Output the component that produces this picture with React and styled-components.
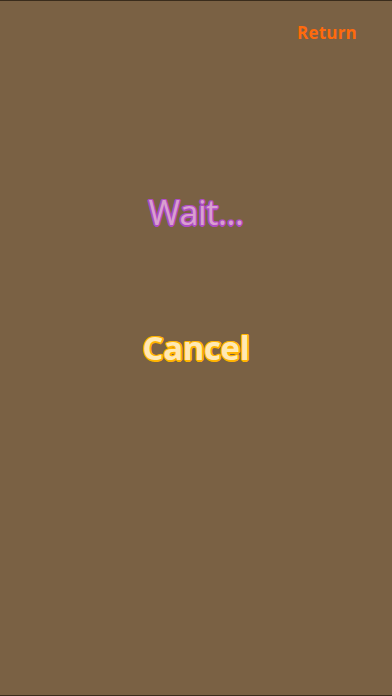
import React from 'react';
import styled, { createGlobalStyle } from 'styled-components';

const GlobalStyle = createGlobalStyle`
  html, body {
    margin: 0;
    padding: 0;
    background: #7a6144;
  }
  #root {
    height: 100vh;
  }
`;

const Screen = styled.div`
  height: 696px;
  box-sizing: border-box;
  background: #7a6144;
  border-top: 1px solid #3a2c1c;
  border-bottom: 1px solid #3a2c1c;
  display: flex;
  flex-direction: column;
  font-family: "Open Sans", "Noto Sans", sans-serif;
`;

const TopBar = styled.div`
  display: flex;
  justify-content: flex-end;
  padding: 20px 35px 0 0;
`;

const ReturnButton = styled.button`
  background: none;
  border: none;
  padding: 0;
  color: #ff6a0c;
  font-family: inherit;
  font-weight: 700;
  font-size: 17px;
  line-height: 24px;
  letter-spacing: 0.2px;
  cursor: pointer;
`;

const Center = styled.div`
  display: flex;
  flex-direction: column;
  align-items: center;
  padding-top: 140px;
  gap: 83px;
`;

const Outlined = styled.div`
  font-size: ${(p) => p.size}px;
  font-weight: ${(p) => p.weight};
  line-height: 1.6;
  color: ${(p) => p.fill};
  letter-spacing: -0.4px;
  text-shadow:
    1.5px 0 0 ${(p) => p.stroke},
    -1.5px 0 0 ${(p) => p.stroke},
    0 1.5px 0 ${(p) => p.stroke},
    0 -1.5px 0 ${(p) => p.stroke},
    1px 1px 0 ${(p) => p.stroke},
    -1px -1px 0 ${(p) => p.stroke},
    1px -1px 0 ${(p) => p.stroke},
    -1px 1px 0 ${(p) => p.stroke};
`;

const App = () => {
  return (
    <>
      <GlobalStyle />
      <Screen>
        <TopBar>
          <ReturnButton>Return</ReturnButton>
        </TopBar>
        <Center>
          <Outlined size={34} weight={400} fill="#d9a0cf" stroke="#b04cc4">
            Wait...
          </Outlined>
          <Outlined size={33} weight={700} fill="#ffe9b4" stroke="#ffb300">
            Cancel
          </Outlined>
        </Center>
      </Screen>
    </>
  );
};

export default App;
